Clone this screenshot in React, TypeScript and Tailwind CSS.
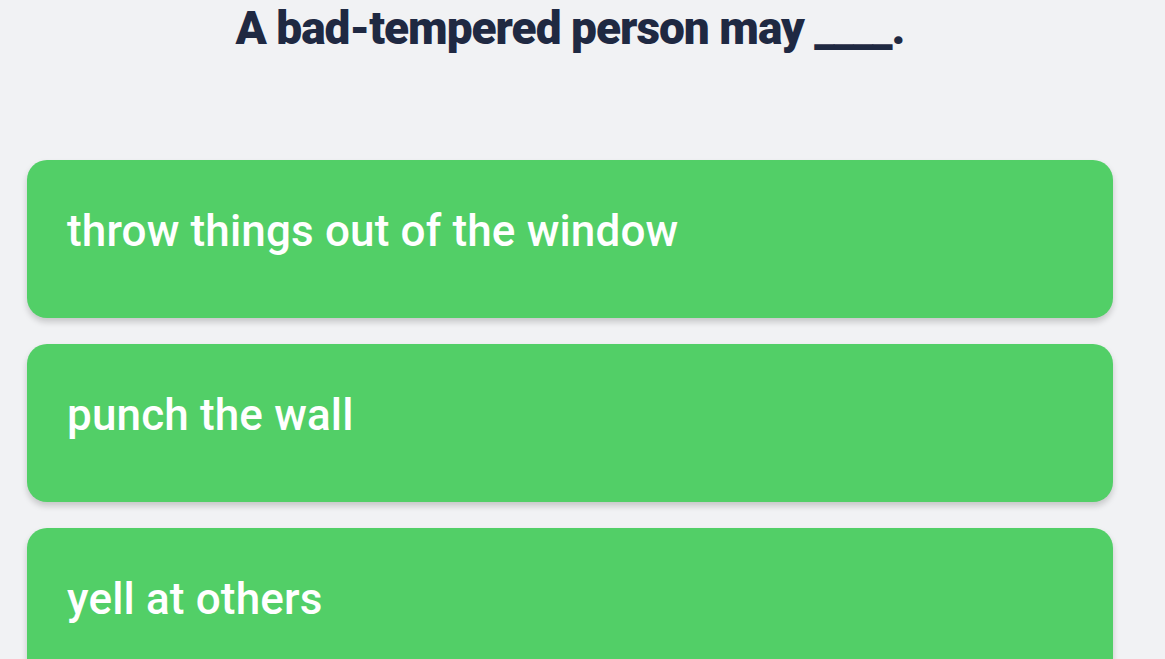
export default function App() {
  const options = ["throw things out of the window", "punch the wall", "yell at others"];

  return (
    <div className="h-[659px] overflow-hidden bg-[#f1f2f4] pl-[27px] pr-[52px] font-['Roboto',sans-serif]">
      <h1 className="text-center text-[46px] leading-[56px] font-black tracking-[-1px] text-[#1f2942]">
        A bad-tempered person may ____.
      </h1>

      <div className="mt-[104px] flex flex-col gap-[26px]">
        {options.map((opt) => (
          <div
            key={opt}
            className="h-[158px] rounded-[20px] bg-[#52cf67] px-10 shadow-[0_4px_6px_rgba(0,0,0,0.18)]"
          >
            <div className="pt-[45px] text-[44px] leading-[52px] font-medium tracking-[0.15px] text-white">{opt}</div>
          </div>
        ))}
      </div>
    </div>
  );
}
